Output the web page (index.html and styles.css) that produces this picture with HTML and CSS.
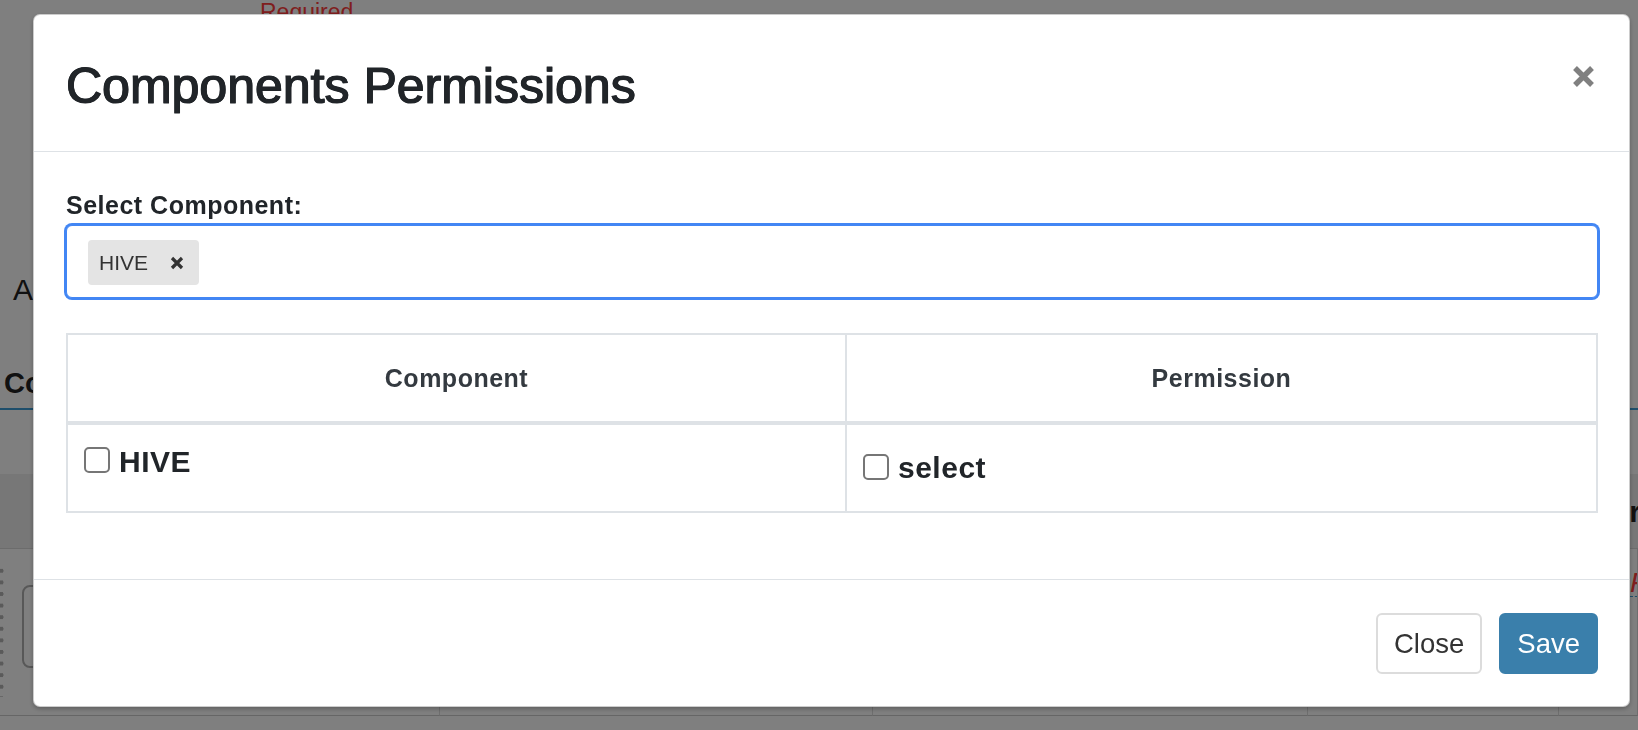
FILE: index.html
```html
<!DOCTYPE html>
<html lang="en">
<head>
<meta charset="utf-8">
<title>Components Permissions</title>
<link rel="stylesheet" href="styles.css">
</head>
<body>
<div class="page" aria-hidden="true">
  <div class="bg-required">Required</div>
  <div class="bg-field">Archive Type</div>
  <div class="bg-section">Components</div>
  <table class="bg-table">
    <colgroup><col class="bc1"><col class="bc2"><col class="bc3"><col class="bc4"><col class="bc5"></colgroup>
    <thead>
      <tr><th>Component</th><th>Permissions</th><th>Description</th><th>Status</th><th class="bg-last">Other</th></tr>
    </thead>
    <tbody>
      <tr>
        <td><div class="bg-drag-row"><span class="bg-handle"></span><span class="bg-input"></span></div></td>
        <td></td>
        <td></td>
        <td></td>
        <td class="bg-last"><span class="bg-link">Fix</span></td>
      </tr>
    </tbody>
  </table>
</div>

<div class="backdrop"></div>

<div class="modal" role="dialog" aria-labelledby="modal-title">
  <div class="modal-header">
    <h2 class="modal-title" id="modal-title">Components Permissions</h2>
    <button class="close" type="button" aria-label="Close">
      <svg width="23" height="23" viewBox="0 0 23 23"><path d="M3 3L20 20M20 3L3 20" stroke="#808080" stroke-width="5.4" fill="none"/></svg>
    </button>
  </div>
  <div class="modal-body">
    <label class="field-label">Select Component:</label>
    <div class="tag-input">
      <span class="tag">HIVE <svg class="tag-remove" width="14" height="14" viewBox="0 0 14 14"><path d="M2 2L12 12M12 2L2 12" stroke="#333" stroke-width="3.2" fill="none"/></svg></span>
    </div>
    <table class="perm-table">
      <colgroup><col class="pc1"><col class="pc2"></colgroup>
      <thead>
        <tr><th>Component</th><th>Permission</th></tr>
      </thead>
      <tbody>
        <tr>
          <td><label class="check-label"><input type="checkbox"><span class="txt">HIVE</span></label></td>
          <td class="perm-cell"><label class="check-label"><input type="checkbox"><span class="txt">select</span></label></td>
        </tr>
      </tbody>
    </table>
  </div>
  <div class="modal-footer">
    <button class="btn btn-default" type="button">Close</button>
    <button class="btn btn-primary" type="button">Save</button>
  </div>
</div>
</body>
</html>
```
FILE: styles.css
```css
* { box-sizing: border-box; }
html, body { margin: 0; padding: 0; }
body {
  width: 1638px;
  height: 730px;
  overflow: hidden;
  background: #fff;
  color: #222;
  font-family: "Liberation Sans", Arial, Helvetica, sans-serif;
}

/* ---------- background page ---------- */
.bg-required {
  margin-left: 260px;
  font-size: 23px;
  line-height: 25px;
  color: #ff3c3c;
}
.bg-field {
  margin-top: 247px;
  padding-left: 13px;
  font-size: 30px;
  line-height: 36px;
  color: #222;
}
.bg-section {
  margin-top: 58px;
  padding: 0 0 7px 4px;
  font-size: 29px;
  line-height: 35px;
  font-weight: 700;
  color: #222;
  border-bottom: 2px solid #3c9cd6;
}
.bg-table {
  margin-top: 64px;
  width: 1638px;
  table-layout: fixed;
  border-collapse: separate;
  border-spacing: 0;
}
.bg-table .bc1 { width: 440px; }
.bg-table .bc2 { width: 433px; }
.bg-table .bc3 { width: 435px; }
.bg-table .bc4 { width: 251px; }
.bg-table .bc5 { width: 79px; }
.bg-table th {
  padding: 20px 0 18px 40px;
  background: #eee;
  border-bottom: 1px solid #d8d8d8;
  font-size: 30px;
  line-height: 36px;
  font-weight: 700;
  text-align: left;
  white-space: nowrap;
  overflow: hidden;
  color: #222;
}
.bg-table th.bg-last { padding-left: 2px; }
.bg-table td {
  padding: 16px 0 18px;
  border-right: 1px solid #ddd;
  border-bottom: 1px solid #ccc;
  vertical-align: top;
  white-space: nowrap;
  overflow: hidden;
}
.bg-drag-row { display: flex; align-items: flex-start; gap: 18px; }
.bg-handle {
  width: 4px;
  height: 132px;
  background: radial-gradient(circle at 1.5px 50%, #b4b4b4 1.8px, transparent 2.3px) 0 0 / 4px 11.6px repeat-y;
}
.bg-input {
  margin-top: 20px;
  width: 380px;
  height: 83px;
  border: 2px solid #b0b0b0;
  border-radius: 8px;
}
.bg-link {
  display: inline-block;
  margin: 5px 0 0 71px;
  font-size: 28px;
  line-height: 26px;
  font-style: italic;
  color: #ff3c3c;
  border-bottom: 1px dashed #3c9cd6;
}

/* ---------- modal ---------- */
.backdrop {
  position: fixed;
  inset: 0;
  background: rgba(0, 0, 0, 0.5);
}
.modal {
  position: fixed;
  left: 33px;
  top: 14px;
  width: 1597px;
  background: #fff;
  border: 1px solid rgba(0, 0, 0, 0.2);
  border-radius: 7px;
  box-shadow: 0 2px 4px rgba(0, 0, 0, 0.25);
  color: #212529;
}
.modal-header {
  display: flex;
  justify-content: space-between;
  align-items: flex-start;
  padding: 41px 31px 35px 32px;
  border-bottom: 1px solid #dee2e6;
}
.modal-title {
  margin: 0;
  font-size: 50px;
  line-height: 60px;
  font-weight: 400;
  color: #212529;
  -webkit-text-stroke: 1.2px #212529;
  text-shadow: 0.6px 0 0 #212529, -0.4px 0 0 #212529;
}
.close {
  display: flex;
  margin: 9px 3px 0 0;
  padding: 0;
  border: 0;
  background: none;
  width: 23px;
  height: 23px;
}
.modal-body {
  padding: 35px 31px 66px 32px;
}
.field-label {
  display: block;
  margin: 0 0 2px;
  font-size: 25px;
  line-height: 36px;
  font-weight: 700;
  letter-spacing: 0.5px;
  color: #212529;
}
.tag-input {
  display: flex;
  align-items: center;
  padding: 14px 21px 12px;
  border: 1px solid #4286f4;
  box-shadow: 0 0 0 2px #4286f4;
  border-radius: 6px;
  background: #fff;
}
.tag {
  display: inline-flex;
  align-items: center;
  gap: 22px;
  height: 45px;
  padding: 0 15px 0 11px;
  background: #e4e4e4;
  border-radius: 4px;
  font-size: 21px;
  color: #333;
}
.tag-remove { display: block; }

.perm-table {
  margin-top: 35px;
  width: 100%;
  table-layout: fixed;
  border-collapse: separate;
  border-spacing: 0;
  border-top: 2px solid #dee2e6;
  border-left: 2px solid #dee2e6;
}
.perm-table .pc1 { width: 779px; }
.perm-table .pc2 { width: 751px; }
.perm-table th {
  padding: 25px 16px;
  border-right: 2px solid #dee2e6;
  border-bottom: 4px solid #dee2e6;
  font-size: 25px;
  line-height: 36px;
  font-weight: 700;
  letter-spacing: 0.5px;
  text-align: center;
  color: #343a40;
}
.perm-table td {
  padding: 22px 16px 31px;
  border-right: 2px solid #dee2e6;
  border-bottom: 2px solid #dee2e6;
  vertical-align: top;
}
.perm-table td.perm-cell { padding: 29px 16px 25px; }
.check-label {
  display: flex;
  align-items: flex-start;
  font-size: 30px;
  line-height: 36px;
  font-weight: 700;
  letter-spacing: 0.5px;
  color: #212529;
}
.check-label input {
  -webkit-appearance: none;
  appearance: none;
  flex: none;
  width: 26px;
  height: 26px;
  margin: 0;
  border: 2px solid #767676;
  border-radius: 5px;
  background: #fff;
}
.check-label .txt { margin: -3px 0 0 9px; }
.perm-cell .check-label .txt { margin: -4px 0 0 9px; }

.modal-footer {
  display: flex;
  justify-content: flex-end;
  gap: 17px;
  padding: 33px 31px 32px;
  border-top: 1px solid #dee2e6;
}
.btn {
  height: 61px;
  padding: 0 16px;
  border: 2px solid #dcdcdc;
  border-radius: 6px;
  background: #fff;
  color: #333;
  font-family: inherit;
  font-size: 27.5px;
  line-height: 1;
}
.btn-primary {
  background: #3a7fab;
  border-color: #3a7fab;
  color: #fff;
}
```
